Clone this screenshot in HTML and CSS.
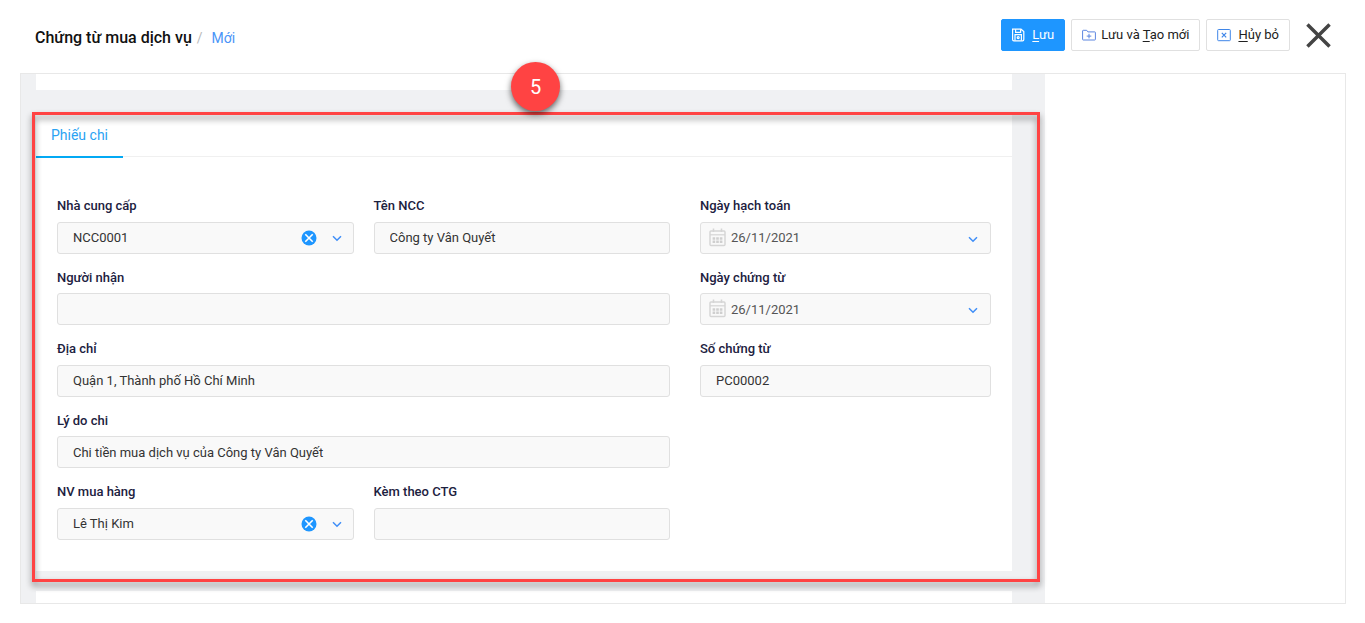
FILE: index.html
```html
<!DOCTYPE html>
<html lang="vi">
<head>
<meta charset="utf-8">
<meta name="viewport" content="width=device-width, initial-scale=1">
<title>Chứng từ mua dịch vụ</title>
<link rel="stylesheet" href="styles.css">
</head>
<body>
<svg class="sprite" aria-hidden="true">
  <symbol id="chevron" viewBox="0 0 10 7"><path d="M1 1.2 5 5.2 9 1.2" fill="none" stroke="currentColor" stroke-width="1.5"/></symbol>
  <symbol id="clear" viewBox="0 0 16 16"><circle cx="8" cy="8" r="7.5" fill="#1e96ff"/><path d="M4.3 4.3 11.7 11.7M11.7 4.3 4.3 11.7" stroke="#fff" stroke-width="1.6"/></symbol>
  <symbol id="calendar" viewBox="0 0 17 19"><g fill="none" stroke="#d5d5d5"><rect x="1" y="3" width="15" height="14.5" rx="1" stroke-width="1.4"/><path d="M1 6.8H16" stroke-width="1.2"/><path d="M4.5 .5V4M12.5 .5V4" stroke-width="1.6"/></g><path d="M3.6 9.3h2.6v2.4H3.6zM7.2 9.3h2.6v2.4H7.2zM10.8 9.3h2.6v2.4h-2.6zM3.6 12.6h2.6V15H3.6zM7.2 12.6h2.6V15H7.2zM10.8 12.6h2.6V15h-2.6z" fill="#cfcfcf"/></symbol>
</svg>

<header class="header">
  <nav class="crumbs" aria-label="Breadcrumb">
    <h1 class="title">Chứng từ mua dịch vụ</h1>
    <span class="slash">/</span>
    <a class="crumb-link" href="#">Mới</a>
  </nav>
  <div class="actions">
    <button class="btn btn-primary" type="button">
      <svg class="btn-icon" viewBox="0 0 14 14" fill="none" stroke="currentColor" stroke-width="1.2"><path d="M3.5 1.2H10L12.8 3.6V11.5Q12.8 12.8 11.5 12.8H2.9Q1.6 12.8 1.6 11.5V1.2H4"/><path d="M4.6 1.2V4.4H9.6V1.2M4 12.6V6.6H10.4V12.6"/><circle cx="7.2" cy="9.6" r="1"/></svg>
      <span><u>L</u>ưu</span>
    </button>
    <button class="btn" type="button">
      <svg class="btn-icon" viewBox="0 0 14 14" fill="none" stroke="#5c86e0" stroke-width="1"><path d="M.6 11.4V2.9Q.6 2.3 1.2 2.3H4.7L5.9 3.9H12.8Q13.4 3.9 13.4 4.5V11.4Q13.4 12 12.8 12H1.2Q.6 12 .6 11.4Z"/><path d="M7 5.8V10.4M4.7 8.1H9.3"/></svg>
      <span>Lưu và <u>T</u>ạo mới</span>
    </button>
    <button class="btn btn-cancel" type="button">
      <svg class="btn-icon" viewBox="0 0 14 14" fill="none" stroke="#3f86e8" stroke-width="1"><rect x=".7" y="1.5" width="12.6" height="11.2" rx=".8"/><path d="M4.8 4.8 9.2 9.4M9.2 4.8 4.8 9.4" stroke-width="1.2"/></svg>
      <span><u>H</u>ủy bỏ</span>
    </button>
    <button class="close" type="button" aria-label="Đóng">
      <svg viewBox="0 0 26 26"><path d="M1.5 1.5 24.5 24.5M24.5 1.5 1.5 24.5" stroke="#444" stroke-width="3.6"/></svg>
    </button>
  </div>
</header>

<main class="workspace">
  <div class="form-area">
    <section class="peek peek-top"></section>

    <section class="card">
      <div class="tabs" role="tablist">
        <button class="tab" type="button" role="tab" aria-selected="true">Phiếu chi</button>
      </div>
      <form class="form">
        <div class="column main-column">
          <div class="field">
            <label for="supplier">Nhà cung cấp</label>
            <div class="control">
              <select class="input" id="supplier"><option>NCC0001</option></select>
              <button class="clear" type="button" aria-label="Xóa"><svg><use href="#clear"/></svg></button>
              <svg class="chevron"><use href="#chevron"/></svg>
            </div>
          </div>
          <div class="field">
            <label for="supplier-name">Tên NCC</label>
            <input class="input" id="supplier-name" type="text" value="Công ty Vân Quyết">
          </div>
          <div class="field wide">
            <label for="receiver">Người nhận</label>
            <input class="input" id="receiver" type="text">
          </div>
          <div class="field wide">
            <label for="address">Địa chỉ</label>
            <input class="input" id="address" type="text" value="Quận 1, Thành phố Hồ Chí Minh">
          </div>
          <div class="field wide">
            <label for="reason">Lý do chi</label>
            <input class="input" id="reason" type="text" value="Chi tiền mua dịch vụ của Công ty Vân Quyết">
          </div>
          <div class="field">
            <label for="buyer">NV mua hàng</label>
            <div class="control">
              <select class="input" id="buyer"><option>Lê Thị Kim</option></select>
              <button class="clear" type="button" aria-label="Xóa"><svg><use href="#clear"/></svg></button>
              <svg class="chevron"><use href="#chevron"/></svg>
            </div>
          </div>
          <div class="field">
            <label for="attached">Kèm theo CTG</label>
            <input class="input" id="attached" type="text">
          </div>
        </div>
        <div class="column">
          <div class="field">
            <label for="posting-date">Ngày hạch toán</label>
            <div class="control date">
              <svg class="calendar"><use href="#calendar"/></svg>
              <input class="input" id="posting-date" type="text" value="26/11/2021">
              <svg class="chevron"><use href="#chevron"/></svg>
            </div>
          </div>
          <div class="field">
            <label for="voucher-date">Ngày chứng từ</label>
            <div class="control date">
              <svg class="calendar"><use href="#calendar"/></svg>
              <input class="input" id="voucher-date" type="text" value="26/11/2021">
              <svg class="chevron"><use href="#chevron"/></svg>
            </div>
          </div>
          <div class="field">
            <label for="voucher-no">Số chứng từ</label>
            <input class="input" id="voucher-no" type="text" value="PC00002">
          </div>
        </div>
      </form>
      <div class="highlight"></div>
      <div class="step">5</div>
    </section>

    <section class="peek"></section>
  </div>
  <aside class="side"></aside>
</main>
</body>
</html>
```

FILE: styles.css
```css
* { box-sizing: border-box; }

body {
  margin: 0;
  background: #fff;
  color: #212121;
  font: 13px/1.5 Roboto, "Noto Sans", sans-serif;
}

button, input, select { font: inherit; color: inherit; }
button { cursor: pointer; }
svg { display: block; }
.sprite { position: absolute; width: 0; height: 0; }

/* Header */
.header {
  display: flex;
  justify-content: space-between;
  align-items: flex-start;
  padding: 19px 34px 16px 35px;
}
.crumbs { display: flex; align-items: center; height: 38px; }
.title { margin: 0; color: #111; font-size: 16px; font-weight: 500; }
.slash { margin: 0 9px 0 5px; color: #bbb; font-size: 14px; }
.crumb-link { color: #4a94f8; font-size: 14px; text-decoration: none; }

.actions { display: flex; align-items: center; gap: 6px; }
.btn {
  display: flex;
  align-items: center;
  gap: 5px;
  height: 32px;
  padding: 0 10px;
  border: 1px solid #e0e0e0;
  border-radius: 2px;
  background: #fff;
  white-space: nowrap;
}
.btn u { text-underline-offset: 2px; }
.btn-icon { width: 14px; height: 14px; }
.btn-primary { padding: 0 10px 0 9px; border-color: #1e96ff; background: #1e96ff; color: #fff; }
.btn-cancel, .btn-primary { gap: 7px; }
.close { margin-left: 10px; padding: 0; border: 0; background: none; }
.close svg { width: 25px; height: 25px; }

/* Workspace */
.workspace {
  display: flex;
  margin: 0 19px 19px 20px;
  border: 1px solid #e8e8e8;
}
.form-area { flex: 1; padding: 0 33px 0 15px; background: #f0f1f3; }
.side { flex: 0 0 300px; }
.peek { height: 12px; background: #fff; }
.peek-top { height: 16px; }

.card { position: relative; margin: 22px 0 20px; background: #fff; }
.tabs { display: flex; height: 45px; border-bottom: 1px solid #f0f0f0; }
.tab {
  height: 46px;
  padding: 2px 15px 0;
  border: 0;
  border-bottom: 2px solid #03a9f4;
  background: none;
  color: #2ba3f3;
  font-size: 14px;
}

.form {
  display: grid;
  grid-template-columns: 613fr 291fr;
  gap: 30px;
  padding: 39px 21px 31px;
}
.column { display: grid; align-content: start; gap: 14px 20px; }
.main-column { grid-template-columns: 1fr 1fr; }
.wide { grid-column: 1 / -1; }

.field label { display: block; margin-bottom: 6px; color: #1c2140; font-weight: 500; }
.control { position: relative; }
.input {
  display: block;
  width: 100%;
  height: 32px;
  padding: 0 15px;
  border: 1px solid #e0e0e0;
  border-radius: 3px;
  background: #f9f9f9;
  color: #333;
  appearance: none;
}
.date .input { padding-left: 30px; color: #555; }
.chevron { position: absolute; top: 13px; right: 12px; width: 10px; height: 7px; color: #3f8ef7; }
.date .chevron { top: 14px; right: 13px; }
.clear { position: absolute; top: 8px; right: 37px; padding: 0; border: 0; background: none; }
.clear svg { width: 16px; height: 16px; }
.calendar { position: absolute; top: 6px; left: 9px; width: 17px; height: 19px; }

/* Step annotation */
.highlight {
  position: absolute;
  inset: 0 -28px -11px -4px;
  border: 3px solid #ff4343;
  filter: drop-shadow(0 4px 3px rgba(0, 0, 0, .45));
  pointer-events: none;
}
.step {
  position: absolute;
  top: -50px;
  left: calc(50% - 13px);
  width: 49px;
  height: 49px;
  border-radius: 50%;
  background: #ff4343;
  box-shadow: 0 3px 6px rgba(0, 0, 0, .6);
  color: #fff;
  font-size: 20px;
  line-height: 50px;
  text-align: center;
}
```
